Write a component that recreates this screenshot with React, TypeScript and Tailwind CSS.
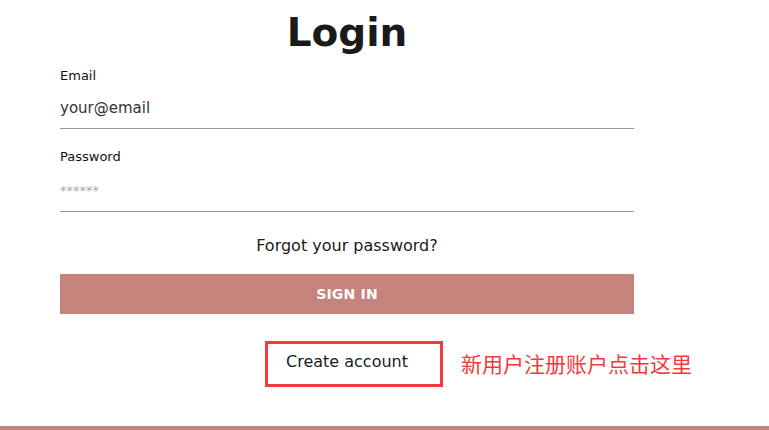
export default function App() {
  return (
    <div className="min-h-screen flex flex-col bg-white font-['DejaVu_Sans',sans-serif]">
      <div className="flex-1">
        <div className="ml-[60px] w-[574px]">
          <h1 className="pt-[10px] text-center text-[39px] leading-[46px] font-bold text-[#1a1a1a]">Login</h1>

          <label className="mt-[12px] block text-[13px] leading-[16px] text-[#111]">Email</label>
          <input
            type="email"
            defaultValue="your@email"
            className="mt-[4px] block h-[41px] w-full border-b border-[#999] bg-transparent text-[15px] text-[#333] outline-none"
          />

          <label className="mt-[20px] block text-[13px] leading-[16px] text-[#111]">Password</label>
          <input
            type="password"
            placeholder="******"
            className="mt-[5px] block h-[42px] w-full border-b border-[#999] bg-transparent text-[13px] text-[#333] outline-none placeholder:text-[#aaa]"
          />

          <p className="mt-[24px] text-center text-[16px] leading-[20px] text-[#1a1a1a]">Forgot your password?</p>

          <button className="mt-[18px] flex h-[40px] w-full items-center justify-center bg-[#c4837b] text-[14px] font-bold tracking-[0.2px] text-white">
            SIGN IN
          </button>

          <div className="mt-[27px] ml-[205px] flex items-center">
            <a className="shrink-0 border-[3px] border-[#f23a3a] pt-[8px] pb-[12px] pl-[18px] pr-[32px] text-[16px] leading-[20px] text-[#1b1b24] whitespace-nowrap">
              Create account
            </a>
            <span className="ml-[18px] shrink-0 whitespace-nowrap font-['Noto_Sans_CJK_SC',sans-serif] text-[21px] text-[#f23a3a]">
              新用户注册账户点击这里
            </span>
          </div>
        </div>
      </div>
      <div className="h-[4px] bg-[#c4837b]" />
    </div>
  )
}
